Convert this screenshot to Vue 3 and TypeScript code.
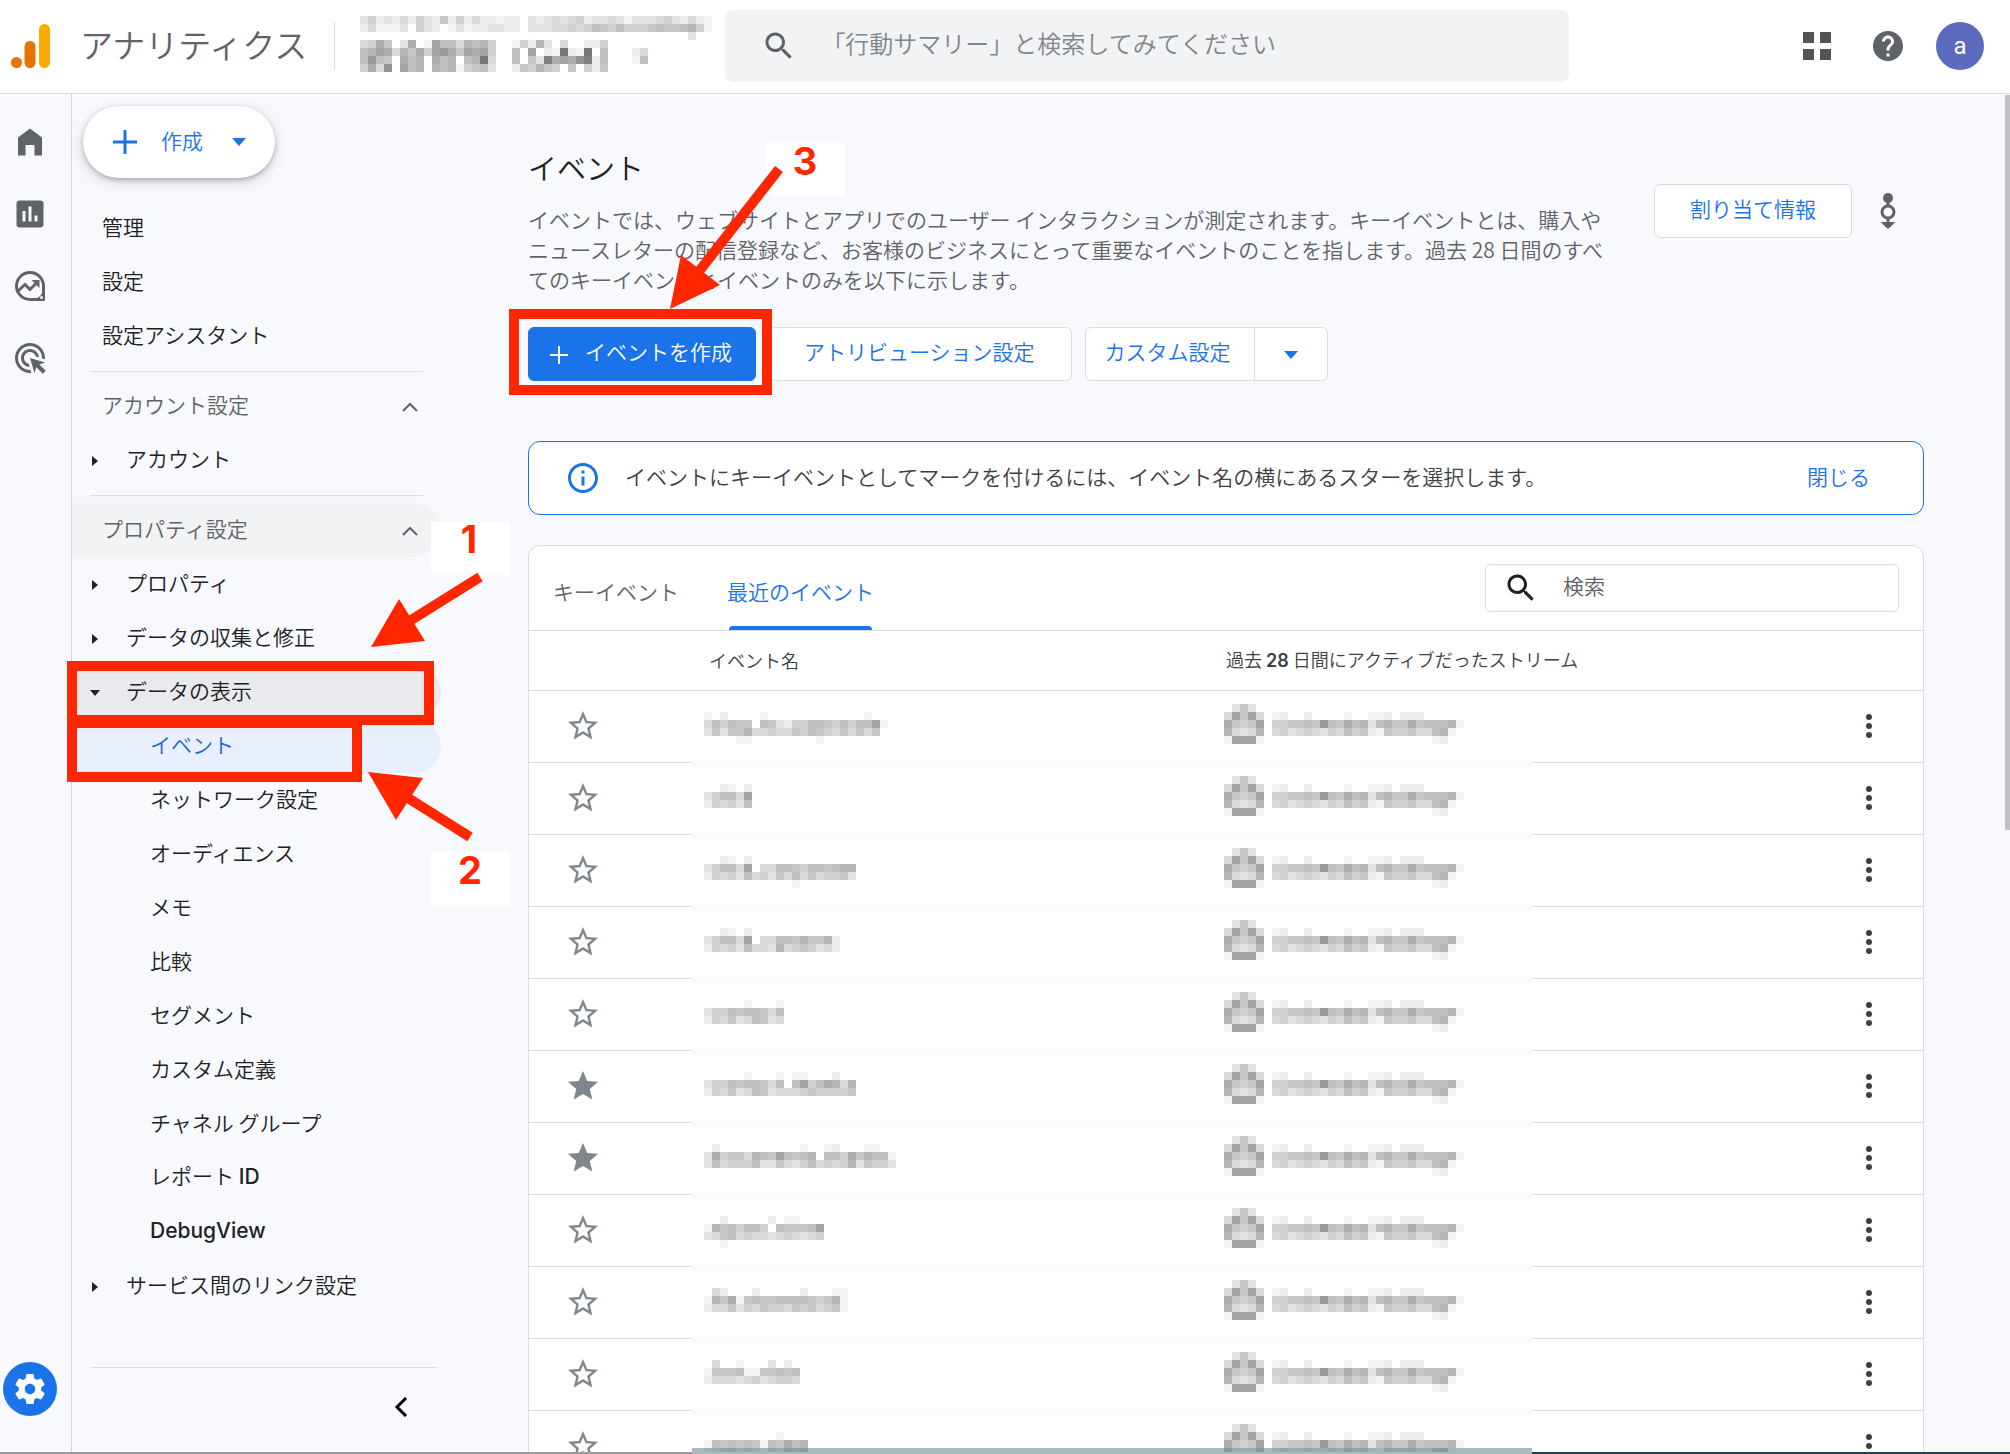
<script setup lang="ts">
import { h, ref } from 'vue'

const CELL = 8

// Redacted text is drawn as a grid of grey squares; each hex digit is a darkness level.
const Mosaic = (props: { rows: string[]; cool?: boolean }) => {
  const cols = Math.max(...props.rows.map((r) => r.length))
  const rects = props.rows.flatMap((row, y) =>
    [...row].flatMap((ch, x) => {
      if (ch === '.') return []
      const g = 254 - parseInt(ch, 16) * 9
      const b = props.cool && x < 5 ? g + 3 : g
      return [
        h('rect', { x: x * CELL, y: y * CELL, width: CELL, height: CELL, fill: `rgb(${g}, ${b}, ${b})` }),
      ]
    }),
  )
  return h(
    'svg',
    {
      width: cols * CELL,
      height: props.rows.length * CELL,
      'shape-rendering': 'crispEdges',
      'aria-hidden': 'true',
      style: 'display: block',
    },
    rects,
  )
}
Mosaic.props = ['rows', 'cool']

const accountMosaic = [
  '35232425326252422122.32343452334313334532421',
  '24111305320131223322.33344545765755567667851',
  '.....................0...................3..',
  '4596.3901a7748785..15283.4..225',
  '78a948695ab96a9a5..7.a.21f21f.7...240',
  '7b76.978.978.78f4..7.63e9a9ce27...17',
  '594c.a78.87815673..265865.60526',
]

const streamMosaic = [
  '.363.',
  '4a6a4.12..2....1..112.222',
  '9656a.556676b76978378669677781',
  '84348.45345435475621655644781',
  '1aaa1.....................12',
]

interface EventRow {
  starred: boolean
  name: string[]
}

const events = ref<EventRow[]>([
  { starred: false, name: ['102....1............1', '475766.76325577657577a1', '3636684454465765464646', '....11........1'] },
  { starred: false, name: ['..21.2', '35774a', '254537'] },
  { starred: false, name: ['..21.2', '35774a.447765776788', '2545374536474645563', '...........1'] },
  { starred: false, name: ['..21.2', '35774a.4477686682', '25453744384565342'] },
  { starred: false, name: ['.....1...1', '3557677647', '2546347634'] },
  { starred: true, name: ['.....1...1.11...2', '3557677647.7a579848', '2546347634445655556'] },
  { starred: true, name: ['.2..........1..12...11', '395664876a7678.775968771', '374555733643574545836553'] },
  { starred: false, name: ['..2.....2.11', '18675775.76667a', '346745443454345', '..1'] },
  { starred: false, name: ['.42...2.....2...11', '186916766777765681', '244635465546564561'] },
  { starred: false, name: ['.4..1...3.2', '166671166767', '244434534554'] },
  { starred: false, name: ['.........1', '1767676176978', '2456454154767'] },
])

const topItems = ['管理', '設定', '設定アシスタント']
const displayItems = ['イベント', 'ネットワーク設定', 'オーディエンス', 'メモ', '比較', 'セグメント', 'カスタム定義', 'チャネル グループ']
const globalQuery = ref('')
const tableQuery = ref('')

const starPath =
  'M22 9.24l-7.19-.62L12 2 9.19 8.63 2 9.24l5.46 4.73L5.82 21 12 17.27 18.18 21l-1.63-7.03L22 9.24zM12 15.4l-3.76 2.27 1-4.28-3.32-2.88 4.38-.38L12 6.1l1.71 4.04 4.38.38-3.32 2.88 1 4.28L12 15.4z'
const starFullPath = 'M12 17.27L18.18 21l-1.64-7.03L22 9.24l-7.19-.61L12 2 9.19 8.63 2 9.24l5.46 4.73L5.82 21z'
const searchPath =
  'M15.5 14h-.79l-.28-.27C15.41 12.59 16 11.11 16 9.5 16 5.91 13.09 3 9.5 3S3 5.91 3 9.5 5.91 16 9.5 16c1.61 0 3.09-.59 4.23-1.57l.27.28v.79l5 4.99L20.49 19l-4.99-5zm-6 0C7.01 14 5 11.99 5 9.5S7.01 5 9.5 5 14 7.01 14 9.5 11.99 14 9.5 14z'
</script>

<template>
  <div class="page">
    <header class="topbar">
      <svg class="logo" width="40" height="46" viewBox="0 0 40 46" aria-hidden="true">
        <rect x="28" y="1" width="11" height="44" rx="5.5" fill="#f9ab00" />
        <rect x="13.5" y="18" width="11" height="27" rx="5.5" fill="#e37400" />
        <circle cx="5.5" cy="39.5" r="5.5" fill="#e37400" />
      </svg>
      <span class="product">アナリティクス</span>
      <div class="account"><Mosaic :rows="accountMosaic" /></div>
      <label class="global-search">
        <svg width="36" height="36" viewBox="0 0 24 24" fill="#5f6368" aria-hidden="true"><path :d="searchPath" /></svg>
        <input v-model="globalQuery" type="text" aria-label="検索" placeholder="「行動サマリー」と検索してみてください" />
      </label>
      <div class="tools">
        <button class="icon-btn" aria-label="アプリ">
          <svg width="28" height="28" viewBox="0 0 28 28" fill="#515355"><path d="M0 0h11v11H0zM17 0h11v11H17zM0 17h11v11H0zM17 17h11v11H17z" /></svg>
        </button>
        <button class="icon-btn" aria-label="ヘルプ">
          <svg width="36" height="36" viewBox="0 0 24 24" fill="#5f6368"><path d="M12 2C6.48 2 2 6.48 2 12s4.48 10 10 10 10-4.48 10-10S17.52 2 12 2zm1 17h-2v-2h2v2zm2.07-7.75l-.9.92C13.45 12.9 13 13.5 13 15h-2v-.5c0-1.1.45-2.1 1.17-2.83l1.24-1.26c.37-.36.59-.86.59-1.41 0-1.1-.9-2-2-2s-2 .9-2 2H8c0-2.21 1.79-4 4-4s4 1.79 4 4c0 .88-.36 1.68-.93 2.25z" /></svg>
        </button>
        <button class="avatar">a</button>
      </div>
    </header>

    <div class="body">
      <nav class="rail" aria-label="メイン">
        <a href="#" aria-label="ホーム"><svg width="36" height="36" viewBox="0 0 24 24" fill="#5f6368"><path d="M12 3L4 9v12h5v-7h6v7h5V9z" /></svg></a>
        <a href="#" aria-label="レポート"><svg width="36" height="36" viewBox="0 0 24 24" fill="#5f6368"><path d="M19 3H5c-1.100 0-2 .9-2 2v14c0 1.100.9 2 2 2h14c1.100 0 2-.9 2-2V5c0-1.100-.9-2-2-2zM9 17H7v-7h2v7zm4 0h-2V7h2v10zm4 0h-2v-4h2v4z" /></svg></a>
        <a href="#" aria-label="探索">
          <svg width="36" height="36" viewBox="0 0 36 36" fill="none" stroke="#5f6368">
            <path d="M18 31.500A13.500 13.500 0 1 1 31.500 18V31.500Z" stroke-width="3" stroke-linejoin="round" />
            <path d="M22 31.500Q30 29 31.500 21V31.500Z" fill="#5f6368" stroke="none" />
            <path d="M6 23L13 16.500L18 21.500L26 13.500" stroke-width="3" />
            <path d="M19.500 12h8v8z" fill="#5f6368" stroke="none" />
            <circle cx="29.500" cy="29.500" r="1.500" fill="#f8f9fc" stroke="none" />
          </svg>
        </a>
        <a href="#" aria-label="広告"><svg width="36" height="36" viewBox="0 0 24 24" fill="#5f6368"><path d="M11.710 17.990C8.530 17.840 6 15.220 6 12c0-3.310 2.690-6 6-6 3.220 0 5.840 2.530 5.990 5.710l-2.100-.63C15.480 9.310 13.890 8 12 8c-2.210 0-4 1.790-4 4 0 1.890 1.310 3.480 3.080 3.890l.63 2.100zM22 12c0 .3-.01.6-.04.9l-1.970-.59c.01-.1.010-.21.010-.31 0-4.420-3.580-8-8-8s-8 3.580-8 8 3.580 8 8 8c.1 0 .21 0 .31-.010l.59 1.970c-.3.030-.6.040-.9.040-5.520 0-10-4.480-10-10S6.480 2 12 2s10 4.480 10 10zm-3.770 4.260L22 15l-10-3 3 10 1.260-3.770 4.270 4.270 1.980-1.980-4.280-4.260z" /></svg></a>
        <a href="#" class="admin" aria-label="管理">
          <svg width="36" height="36" viewBox="0 0 24 24" fill="#fff"><path d="M19.430 12.980c.04-.32.070-.64.070-.98s-.030-.66-.070-.98l2.110-1.650c.19-.15.240-.42.120-.64l-2-3.460c-.12-.22-.39-.3-.61-.22l-2.490 1c-.52-.4-1.080-.73-1.690-.98l-.38-2.650C14.460 2.180 14.250 2 14 2h-4c-.25 0-.46.18-.49.42l-.38 2.650c-.61.25-1.170.59-1.690.98l-2.490-1c-.23-.090-.49 0-.61.22l-2 3.460c-.13.22-.070.49.12.64l2.110 1.650c-.040.32-.070.65-.070.98s.030.66.070.98l-2.110 1.650c-.19.15-.24.42-.12.64l2 3.460c.12.22.39.3.61.22l2.490-1c.52.4 1.080.73 1.690.98l.38 2.650c.030.24.24.42.49.42h4c.25 0 .46-.18.49-.42l.38-2.650c.61-.25 1.170-.59 1.690-.98l2.490 1c.23.090.49 0 .61-.22l2-3.460c.12-.22.070-.49-.12-.64l-2.110-1.650zM12 15.500c-1.930 0-3.500-1.570-3.500-3.500s1.570-3.500 3.500-3.500 3.500 1.570 3.500 3.500-1.570 3.500-3.500 3.500z" /></svg>
        </a>
      </nav>

      <aside class="sidebar">
        <button class="create">
          <svg width="24" height="24" viewBox="0 0 24 24" stroke="#1a73e8" stroke-width="3"><path d="M12 0v24M0 12h24" /></svg>
          <span>作成</span>
          <svg width="14" height="8" viewBox="0 0 14 8" fill="#1a73e8"><path d="M0 0h14L7 8z" /></svg>
        </button>
        <nav class="menu" aria-label="管理メニュー">
          <a v-for="item in topItems" :key="item" href="#" class="item">{{ item }}</a>
          <hr />
          <button class="item section">
            アカウント設定
            <svg width="16" height="10" viewBox="0 0 16 10" fill="none" stroke="#5f6368" stroke-width="2"><path d="M1 9l7-7 7 7" /></svg>
          </button>
          <a href="#" class="item sub"><svg width="10" height="10" viewBox="0 0 10 10"><path d="M2 0v10l6-5z" /></svg>アカウント</a>
          <hr />
          <button class="item section hovered">
            プロパティ設定
            <svg width="16" height="10" viewBox="0 0 16 10" fill="none" stroke="#5f6368" stroke-width="2"><path d="M1 9l7-7 7 7" /></svg>
          </button>
          <a href="#" class="item sub"><svg width="10" height="10" viewBox="0 0 10 10"><path d="M2 0v10l6-5z" /></svg>プロパティ</a>
          <a href="#" class="item sub"><svg width="10" height="10" viewBox="0 0 10 10"><path d="M2 0v10l6-5z" /></svg>データの収集と修正</a>
          <a href="#" class="item sub open"><svg width="10" height="10" viewBox="0 0 10 10"><path d="M0 2h10L5 8z" /></svg>データの表示</a>
          <a v-for="(item, i) in displayItems" :key="item" href="#" class="item leaf" :class="{ active: i === 0 }">{{ item }}</a>
          <a href="#" class="item leaf"><span>レポート <span class="latin">ID</span></span></a>
          <a href="#" class="item leaf"><span><span class="latin">DebugView</span></span></a>
          <a href="#" class="item sub"><svg width="10" height="10" viewBox="0 0 10 10"><path d="M2 0v10l6-5z" /></svg>サービス間のリンク設定</a>
        </nav>
        <div class="collapse">
          <button class="icon-btn" aria-label="メニューを閉じる">
            <svg width="14" height="20" viewBox="0 0 14 20" fill="none" stroke="#000" stroke-width="3"><path d="M12 1l-9 9 9 9" /></svg>
          </button>
        </div>
      </aside>

      <main class="content">
        <section class="intro">
          <div>
            <h1>イベント</h1>
            <p>
              イベントでは、ウェブサイトとアプリでのユーザー インタラクションが測定されます。キーイベントとは、購入や<br />ニュースレターの配信登録など、お客様のビジネスにとって重要なイベントのことを指します。過去 28 日間のすべ<br />てのキーイベントとイベントのみを以下に示します。
            </p>
          </div>
          <div class="intro-actions">
            <button class="btn quota">割り当て情報</button>
            <button class="icon-btn" aria-label="データ ストリーム">
              <svg width="18" height="36" viewBox="0 0 18 36" fill="#5f6368">
                <circle cx="9" cy="5" r="5" /><path d="M7.500 5h3v9h-3zM7.500 24h3v6h-3zM1.500 29h15L9 36z" />
                <circle cx="9" cy="19" r="6" fill="none" stroke="#5f6368" stroke-width="3" />
              </svg>
            </button>
          </div>
        </section>

        <div class="actions">
          <button class="btn primary">
            <svg width="18" height="18" viewBox="0 0 18 18" stroke="#fff" stroke-width="2"><path d="M9 0v18M0 9h18" /></svg>
            イベントを作成
          </button>
          <button class="btn attribution">アトリビューション設定</button>
          <div class="split">
            <button class="btn custom">カスタム設定</button>
            <button class="btn more" aria-label="その他の設定">
              <svg width="14" height="8" viewBox="0 0 14 8" fill="#1a73e8"><path d="M0 0h14L7 8z" /></svg>
            </button>
          </div>
        </div>

        <div class="banner" role="status">
          <svg width="36" height="36" viewBox="0 0 24 24" fill="#1a73e8" aria-hidden="true"><path d="M11 7h2v2h-2zm0 4h2v6h-2zm1-9C6.480 2 2 6.480 2 12s4.480 10 10 10 10-4.480 10-10S17.520 2 12 2zm0 18c-4.410 0-8-3.590-8-8s3.590-8 8-8 8 3.590 8 8-3.590 8-8 8z" /></svg>
          <span class="banner-text">イベントにキーイベントとしてマークを付けるには、イベント名の横にあるスターを選択します。</span>
          <button class="text-btn">閉じる</button>
        </div>

        <section class="card">
          <div class="tabs">
            <button class="tab">キーイベント</button>
            <button class="tab current">最近のイベント</button>
            <label class="table-search">
              <svg width="36" height="36" viewBox="0 0 24 24" fill="#202124" aria-hidden="true"><path :d="searchPath" /></svg>
              <input v-model="tableQuery" type="text" aria-label="イベントを検索" placeholder="検索" />
            </label>
          </div>
          <table>
            <colgroup><col class="c-star" /><col class="c-name" /><col class="c-stream" /><col /></colgroup>
            <thead>
              <tr>
                <th></th>
                <th class="h-name">イベント名</th>
                <th colspan="2" class="h-stream">過去 <span class="num">28</span> 日間にアクティブだったストリーム</th>
              </tr>
            </thead>
            <tbody>
              <tr v-for="(row, i) in events" :key="i">
                <td class="star">
                  <button class="icon-btn" aria-label="キーイベントとしてマーク" @click="row.starred = !row.starred">
                    <svg width="36" height="36" viewBox="0 0 24 24" fill="#80868b"><path :d="row.starred ? starFullPath : starPath" /></svg>
                  </button>
                </td>
                <td class="masked name"><Mosaic :rows="row.name" /></td>
                <td class="masked"><Mosaic :rows="streamMosaic" cool /></td>
                <td class="row-menu">
                  <button class="icon-btn" aria-label="メニュー">
                    <svg width="8" height="26" viewBox="0 0 8 26" fill="#3c4043"><circle cx="4" cy="4" r="3" /><circle cx="4" cy="13" r="3" /><circle cx="4" cy="22" r="3" /></svg>
                  </button>
                </td>
              </tr>
            </tbody>
          </table>
        </section>
      </main>
      <div class="scroll-thumb"></div>
    </div>

    <div class="masked-edge"></div>
    <div class="window-edge"></div>

    <svg class="annotations" width="900" height="920" viewBox="0 0 900 920">
      <g fill="#fff">
        <rect x="431" y="522" width="79" height="53" />
        <rect x="431" y="852" width="79" height="53" />
        <rect x="766" y="143" width="79" height="53" />
      </g>
      <g fill="none" stroke="#ff2600" stroke-width="10">
        <rect x="72" y="666" width="357" height="54" />
        <rect x="72" y="723" width="285" height="54" />
        <rect x="514" y="314" width="253" height="76" />
        <path d="M480 577L408 622M470 837L408 798M779 169L700 270" />
      </g>
      <g fill="#ff2600">
        <path d="M371 647L399 599L425 641zM368 772L423 778L396 820zM670 309L681 255L720 285z" />
        <text x="469" y="553">1</text>
        <text x="470" y="884">2</text>
        <text x="805" y="175">3</text>
      </g>
    </svg>
  </div>
</template>

<style>
body {
  margin: 0;
  background: #f8f9fc;
}
</style>

<style scoped>
.page {
  position: relative;
  display: flex;
  flex-direction: column;
  height: 100vh;
  overflow: hidden;
  background: #f8f9fc;
  color: #202124;
  font-family: 'Noto Sans CJK JP', sans-serif;
  font-size: 21px;
  font-weight: 350;
  line-height: 30px;
}
.page * {
  box-sizing: border-box;
}
button,
input {
  margin: 0;
  padding: 0;
  border: 0;
  background: none;
  color: inherit;
  font: inherit;
}
input {
  flex: 1;
  min-width: 0;
  padding-bottom: 6px;
  outline: none;
}
a {
  color: inherit;
  text-decoration: none;
}
svg {
  flex: none;
}
.icon-btn {
  display: flex;
}
.latin {
  font-family: Inter, sans-serif;
  font-weight: 500;
}

/* Top bar */
.topbar {
  flex: none;
  display: flex;
  align-items: center;
  height: 94px;
  padding: 0 26px 1px 11px;
  border-bottom: 1px solid #dadce0;
  background: #fff;
}
.product {
  margin-left: 29px;
  padding: 0 27px 4px 0;
  border-right: 1px solid #dadce0;
  color: #5f6368;
  font-size: 33px;
  line-height: 44px;
}
.account {
  width: 365px;
  margin: 0 0 4px 25px;
}
.global-search {
  flex: 0 1 844px;
  display: flex;
  align-items: center;
  height: 72px;
  padding: 0 36px;
  border-radius: 8px;
  background: #f1f3f4;
  font-size: 24px;
}
.global-search input {
  margin-left: 24px;
}
.global-search input::placeholder {
  color: #80868b;
  opacity: 1;
}
.tools {
  display: flex;
  align-items: center;
  gap: 30px;
  margin-left: auto;
}
.tools .icon-btn + .icon-btn {
  margin-left: 9px;
}
.avatar {
  width: 48px;
  height: 48px;
  border-radius: 50%;
  background: #5c6bc0;
  color: #fff;
  font-family: Roboto, sans-serif;
  font-size: 24px;
  font-weight: 400;
}

/* Body columns */
.body {
  position: relative;
  flex: 1;
  min-height: 0;
  display: flex;
}
.rail {
  flex: none;
  display: flex;
  flex-direction: column;
  align-items: center;
  gap: 36px;
  width: 72px;
  padding: 30px 11px 38px 0;
  border-right: 1px solid #d3d5d9;
}
.rail a {
  display: flex;
}
.rail .admin {
  width: 54px;
  height: 54px;
  margin-top: auto;
  align-items: center;
  justify-content: center;
  border-radius: 50%;
  background: #1a73e8;
}

/* Sidebar */
.sidebar {
  flex: none;
  display: flex;
  flex-direction: column;
  align-items: flex-start;
  width: 369px;
  padding-top: 12px;
}
.create {
  display: flex;
  align-items: center;
  height: 72px;
  margin: 0 0 23px 11px;
  padding: 0 29px 0 30px;
  border-radius: 36px;
  background: #fff;
  box-shadow: 0 2px 4px rgba(60, 64, 67, 0.3), 0 4px 14px rgba(60, 64, 67, 0.2);
  color: #1a73e8;
}
.create span {
  margin: 0 29px 0 24px;
  padding-bottom: 4px;
}
.menu {
  align-self: stretch;
}
.item {
  display: flex;
  align-items: center;
  width: 100%;
  height: 54px;
  padding-left: 30px;
  padding-bottom: 5px;
  border-radius: 0 27px 27px 0;
}
.item svg {
  margin-top: 6px;
}
.item.section {
  justify-content: space-between;
  padding-right: 23px;
  color: #5f6368;
}
.item.hovered {
  background: #f1f3f4;
}
.item.sub {
  padding-left: 18px;
}
.item.sub svg {
  margin-right: 26px;
  fill: #202124;
}
.item.open {
  background: #e8eaed;
}
.item.leaf {
  padding-left: 78px;
}
.item.active {
  background: #e8f0fe;
  color: #1967d2;
}
hr {
  height: 1px;
  margin: 8px 18px 7px;
  border: 0;
  background: #dadce0;
}
.collapse {
  display: flex;
  justify-content: flex-end;
  width: 346px;
  margin: auto 0 37px 19px;
  padding: 29px 29px 0 0;
  border-top: 1px solid #dadce0;
}

/* Main */
.content {
  flex: 1;
  min-width: 0;
  padding: 53px 86px 0 87px;
}
.intro {
  display: flex;
  justify-content: space-between;
  align-items: flex-start;
}
h1 {
  margin: 0;
  font-size: 29px;
  font-weight: inherit;
  line-height: 40px;
}
.intro p {
  margin: 17px 0 0;
  color: #5f6368;
  white-space: nowrap;
}
.intro-actions {
  display: flex;
  align-items: center;
  gap: 27px;
  margin: 37px 27px 0 0;
}
.btn {
  display: flex;
  align-items: center;
  height: 54px;
  padding-bottom: 6px;
  border: 1px solid #dadce0;
  border-radius: 6px;
  background: #fff;
  color: #1a73e8;
  white-space: nowrap;
}
.btn svg {
  margin-top: 7px;
}
.quota {
  padding-right: 35px;
  padding-left: 35px;
}
.actions {
  display: flex;
  gap: 13px;
  margin-top: 33px;
}
.primary {
  gap: 17px;
  padding-right: 23px;
  padding-left: 21px;
  border-color: #1a73e8;
  background: #1a73e8;
  color: #fff;
}
.attribution {
  padding-right: 36px;
  padding-left: 34px;
}
.split {
  display: flex;
}
.custom {
  padding-right: 23px;
  padding-left: 19px;
  border-radius: 6px 0 0 6px;
}
.more {
  margin-left: -1px;
  padding-right: 29px;
  padding-left: 29px;
  border-radius: 0 6px 6px 0;
}
.banner {
  display: flex;
  align-items: center;
  height: 74px;
  margin-top: 60px;
  padding: 0 53px 0 36px;
  border: 1px solid #1a73e8;
  border-radius: 12px;
  background: #fff;
  color: #3c4043;
}
.banner-text {
  flex: 1;
  margin-left: 24px;
  padding-bottom: 5px;
  white-space: nowrap;
}
.text-btn {
  padding-bottom: 5px;
  color: #1a73e8;
}

/* Table card */
.card {
  margin-top: 30px;
  border: 1px solid #dadce0;
  border-radius: 12px;
  background: #fff;
}
.tabs {
  display: flex;
  gap: 48px;
  height: 85px;
  padding: 0 24px;
  border-bottom: 1px solid #dadce0;
}
.tab {
  position: relative;
  padding-top: 6px;
  color: #5f6368;
  white-space: nowrap;
}
.tab.current {
  color: #1a73e8;
}
.tab.current::after {
  content: '';
  position: absolute;
  right: 2px;
  bottom: 0;
  left: 2px;
  height: 4px;
  border-radius: 4px 4px 0 0;
  background: #1a73e8;
}
.table-search {
  flex: 0 1 414px;
  display: flex;
  align-items: center;
  height: 48px;
  margin: 18px 0 0 auto;
  padding: 0 17px;
  border: 1px solid #dadce0;
  border-radius: 6px;
}
.table-search input {
  margin-left: 24px;
}
.table-search input::placeholder {
  color: #5f6368;
  opacity: 1;
}
table {
  width: 100%;
  border-spacing: 0;
  table-layout: fixed;
}
.c-star {
  width: 163px;
}
.c-name {
  width: 520px;
}
.c-stream {
  width: 320px;
}
th {
  height: 60px;
  padding: 0 0 2px;
  border-bottom: 1px solid #dadce0;
  color: #3c4043;
  font-size: 18px;
  font-weight: inherit;
  text-align: left;
}
.h-name {
  padding-left: 17px;
}
.h-stream {
  padding-left: 14px;
}
.num {
  font-family: Inter, sans-serif;
  font-weight: 600;
}
td {
  height: 72px;
  padding: 0 0 2px;
  border-bottom: 1px solid #dadce0;
}
.star {
  padding-left: 36px;
}
.masked {
  padding: 13px 0 0 12px;
  border-bottom: 0;
  background: linear-gradient(#fafcfb 5px, #fff 5px, #fff 69px, #fafcfb 69px);
  vertical-align: top;
}
tr:first-child .masked {
  background: linear-gradient(#fff 69px, #fafcfb 69px);
}
.masked.name {
  padding-top: 21px;
}
.row-menu .icon-btn {
  margin: 0 50px 0 auto;
}

/* Window chrome */
.scroll-thumb {
  position: absolute;
  top: 1px;
  right: 0;
  width: 5px;
  height: 735px;
  background: #c1c1c1;
}
.window-edge {
  position: absolute;
  right: 0;
  bottom: 0;
  left: 0;
  height: 2px;
  background: linear-gradient(90deg, #9b9a9c 692px, #a9bbc0 692px, #a9bbc0 1532px, #1f444c 1532px);
}
.masked-edge {
  position: absolute;
  bottom: 0;
  left: 692px;
  width: 840px;
  height: 6px;
  background: rgba(83, 122, 131, 0.5);
}
.annotations {
  position: absolute;
  top: 0;
  left: 0;
  pointer-events: none;
  font-family: Inter, sans-serif;
  font-size: 38px;
  font-weight: 700;
  text-anchor: middle;
}
</style>
